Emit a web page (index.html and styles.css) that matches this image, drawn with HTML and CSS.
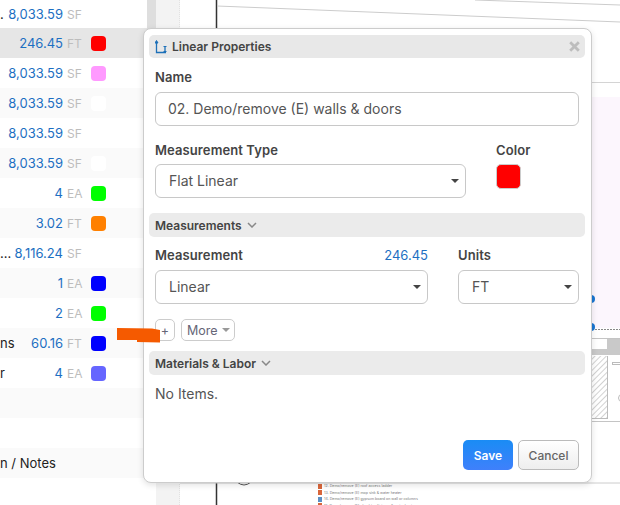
FILE: index.html
```html
<!DOCTYPE html>
<html lang="en">
<head>
<meta charset="utf-8">
<title>Linear Properties</title>
<link rel="stylesheet" href="styles.css">
</head>
<body>
<div class="app">
  <div class="list">
    <div class="row alt"><span class="name">.</span><span class="qty">8,033.59</span><span class="unit">SF</span><span class="chip"></span></div>
    <div class="row sel"><span class="name"></span><span class="qty">246.45</span><span class="unit">FT</span><span class="chip c-red"></span></div>
    <div class="row"><span class="name"></span><span class="qty">8,033.59</span><span class="unit">SF</span><span class="chip c-pink"></span></div>
    <div class="row alt"><span class="name"></span><span class="qty">8,033.59</span><span class="unit">SF</span><span class="chip c-white"></span></div>
    <div class="row"><span class="name"></span><span class="qty">8,033.59</span><span class="unit">SF</span><span class="chip"></span></div>
    <div class="row alt"><span class="name"></span><span class="qty">8,033.59</span><span class="unit">SF</span><span class="chip c-white"></span></div>
    <div class="row"><span class="name"></span><span class="qty">4</span><span class="unit">EA</span><span class="chip c-green"></span></div>
    <div class="row alt"><span class="name"></span><span class="qty">3.02</span><span class="unit">FT</span><span class="chip c-orange"></span></div>
    <div class="row"><span class="name">...</span><span class="qty">8,116.24</span><span class="unit">SF</span><span class="chip"></span></div>
    <div class="row alt"><span class="name"></span><span class="qty">1</span><span class="unit">EA</span><span class="chip c-blue"></span></div>
    <div class="row"><span class="name"></span><span class="qty">2</span><span class="unit">EA</span><span class="chip c-green"></span></div>
    <div class="row alt"><span class="name">ns</span><span class="qty">60.16</span><span class="unit">FT</span><span class="chip c-blue"></span></div>
    <div class="row"><span class="name">r</span><span class="qty">4</span><span class="unit">EA</span><span class="chip c-violet"></span></div>
    <div class="row alt"></div>
    <div class="row"></div>
    <div class="row alt"><span class="name">n / Notes</span></div>
  </div>
  <div class="scrollbar"><div class="thumb"></div></div>
  <div class="gutter"></div>
  <div class="canvas">
    <svg class="drawing" width="440" height="505" viewBox="180 0 440 505">
      <defs>
        <pattern id="hatch" width="4" height="4" patternUnits="userSpaceOnUse" patternTransform="rotate(45)">
          <rect width="4" height="4" fill="#fff"/>
          <path d="M0 0V4" stroke="#c4c4c4" stroke-width="1.500"/>
        </pattern>
      </defs>
      <path d="M216.500 0V505" stroke="#333" stroke-width="1.500" fill="none"/>
      <path d="M217 6L620 22M475 0L620 5" stroke="#ccc" fill="none"/>
      <path d="M592 82.500H620" stroke="#d4d4d4" fill="none"/>
      <rect x="592" y="97" width="28" height="231" fill="#fcf6fd"/>
      <path d="M592 329.500H620" stroke="#888" stroke-dasharray="2 1" fill="none"/>
      <path d="M592 338.500H620M592 421.500H620" stroke="#c4c4c4" fill="none"/>
      <rect x="607" y="339" width="13" height="16" fill="#c9c9c9"/>
      <rect x="592" y="349" width="15" height="6" fill="#c9c9c9"/>
      <rect x="592" y="356" width="15" height="63" fill="url(#hatch)"/>
      <path d="M607.500 356V419M592 418.500H607" stroke="#bbb" fill="none"/>
      <rect x="612.500" y="362.500" width="8" height="2" fill="#fff" stroke="#bbb"/>
      <circle cx="622" cy="398" r="3.500" fill="#fff" stroke="#bbb"/>
      <circle cx="591" cy="299" r="4" fill="#1976d2"/>
      <circle cx="591" cy="327" r="4" fill="#1976d2"/>
      <path d="M180 483H620" stroke="#ccc" fill="none"/>
      <path d="M237 482Q244 488 251 482" stroke="#555" fill="none"/>
      <rect x="318" y="484" width="4" height="5" fill="#d9663a"/>
      <rect x="318" y="490" width="4" height="5" fill="#d9663a"/>
      <rect x="318" y="497" width="4" height="5" fill="#5b8fc4"/>
      <rect x="318" y="503" width="4" height="2" fill="#d9663a"/>
    </svg>
    <div class="legend">
      <span>12. Demo/remove (E) roof access ladder</span>
      <span>13. Demo/remove (E) mop sink &amp; water heater</span>
      <span>14. Demo/remove (E) gypsum board on wall or columns</span>
      <span>15. Demo/remove (E) plumbing fixtures &amp; water heater</span>
    </div>
  </div>

  <section class="modal">
    <header class="modal-title">
      <svg class="title-icon" width="12" height="14" viewBox="0 0 12 14">
        <path d="M1.500 2V12.500H11M10 7V12" fill="none" stroke="#1d70b8" stroke-width="1.300"/>
        <path d="M0 3L1.500 .5L3 3ZM8.500 6.500H11.500M8.500 11.500H11.500" fill="#1d70b8" stroke="#1d70b8"/>
      </svg>
      <span>Linear Properties</span>
      <svg class="close" width="11" height="11" viewBox="0 0 11 11"><path d="M1.200 1.200L9.800 9.800M9.800 1.200L1.200 9.800" fill="none" stroke="#bdbdbd" stroke-width="2.800"/></svg>
    </header>
    <div class="field name-field">
      <label class="label">Name</label>
      <div class="input tall">02. Demo/remove (E) walls &amp; doors</div>
    </div>
    <div class="type-row">
      <div class="field grow">
        <label class="label">Measurement Type</label>
        <div class="input select">Flat Linear<span class="caret"></span></div>
      </div>
      <div class="field color-field">
        <label class="label">Color</label>
        <span class="swatch"></span>
      </div>
    </div>
    <div class="section-bar first">Measurements <svg class="chev" width="10" height="6" viewBox="0 0 10 6"><path d="M1 1L5 5L9 1" fill="none" stroke="#888" stroke-width="1.500"/></svg></div>
    <div class="meas-row">
      <div class="field grow">
        <div class="label-row"><label class="label">Measurement</label><span class="value">246.45</span></div>
        <div class="input tall select">Linear<span class="caret"></span></div>
      </div>
      <div class="field units-field">
        <label class="label">Units</label>
        <div class="input tall select">FT<span class="caret"></span></div>
      </div>
    </div>
    <div class="tools">
      <button class="btn-small plus">+</button>
      <button class="btn-small more">More<span class="caret grey"></span></button>
    </div>
    <div class="section-bar">Materials &amp; Labor <svg class="chev" width="10" height="6" viewBox="0 0 10 6"><path d="M1 1L5 5L9 1" fill="none" stroke="#888" stroke-width="1.500"/></svg></div>
    <p class="empty">No Items.</p>
    <footer class="actions">
      <button class="save">Save</button>
      <button class="cancel">Cancel</button>
    </footer>
  </section>

  <svg class="marker" width="43" height="15" viewBox="0 0 43 15"><path d="M0 0L35 .5L43 2V14.500L20 14V12H0Z" fill="#f55a00"/></svg>
</div>
</body>
</html>
```
FILE: styles.css
```css
* { box-sizing: border-box; }
html, body { margin: 0; padding: 0; }
body { width: 620px; height: 505px; overflow: hidden; background: #fff; font-family: Inter, "Liberation Sans", sans-serif; }
.app { position: relative; display: flex; width: 620px; height: 505px; overflow: hidden; }

.list { width: 147px; flex: none; background: #fff; }
.row { display: flex; align-items: center; height: 30px; background: #fff; font-size: 13px; color: #222; }
.row:first-child { height: 28px; }
.row.alt { background: #fafafa; }
.row.alt:first-child { background: #fff; }
.row.sel { background: #e6e6e6; }
.name { flex: 1; min-width: 0; white-space: nowrap; color: #222; }
.qty { color: #1c6fc2; font-size: 13px; }
.unit { width: 16px; margin-left: 4px; color: #bdbdbd; font-size: 12px; white-space: nowrap; }
.chip { width: 15px; height: 15px; margin: 0 41px 0 8px; border-radius: 4px; }
.c-red { background: #f00; }
.c-pink { background: #ff99ff; }
.c-white { background: #fff; }
.c-green { background: #0f0; }
.c-orange { background: #ff8000; }
.c-blue { background: #00f; }
.c-violet { background: #6666ff; }

.scrollbar { width: 9px; flex: none; background: #fff; }
.thumb { height: 120px; background: #dedede; }
.gutter { width: 24px; flex: none; background: #f3f3f3; border-right: 1px dotted #e2e2e2; }
.canvas { flex: 1; position: relative; background: #fff; }
.drawing { position: absolute; left: 0; top: 0; }
.legend { position: absolute; left: 144px; top: 483px; display: flex; flex-direction: column; font-size: 3.600px; line-height: 6.600px; color: #777; white-space: nowrap; }

.modal { position: absolute; left: 143px; top: 28px; width: 449px; height: 455px; display: flex; flex-direction: column; padding: 6px 6px 6px 5px; background: #fff; border: 1px solid #ccc; border-radius: 8px; box-shadow: 0 2px 6px rgba(0,0,0,.12); color: #444; }
.modal-title { display: flex; align-items: center; height: 23px; padding-left: 6px; flex: none; background: #e8e8e8; border-radius: 5px; font-size: 12px; font-weight: 600; color: #444; }
.title-icon { margin-right: 5px; }
.close { margin-left: auto; margin-right: 5px; }

.field { display: flex; flex-direction: column; min-width: 0; }
.grow { flex: 1; }
.label { font-size: 13px; font-weight: 600; line-height: 16px; letter-spacing: .1px; color: #444; }
.label-row { display: flex; justify-content: space-between; align-items: center; }
.value { color: #1c6fc2; font-size: 13px; }
.input { position: relative; height: 34px; margin-top: 6px; padding: 0 0 2px 13px; display: flex; align-items: center; background: #fff; border: 1px solid #c8c8c8; border-radius: 6px; font-size: 14px; color: #555; }
.input.tall { margin-top: 7px; }
.caret { position: absolute; right: 6px; top: 14px; width: 0; height: 0; border-left: 4px solid transparent; border-right: 4px solid transparent; border-top: 4px solid #444; }

.name-field { margin: 11px 6px 0; }
.name-field .input { padding-left: 12px; }
.type-row { display: flex; gap: 30px; margin: 16px 6px 0; }
.color-field { width: 83px; flex: none; }
.swatch { display: block; width: 25px; height: 25px; margin-top: 6px; background: #f00; border: 1px solid #ccc; border-radius: 5px; }
.section-bar { display: flex; align-items: center; gap: 5px; height: 24px; flex: none; padding-left: 6px; background: #ebebeb; border-radius: 5px; font-size: 12px; font-weight: 600; color: #444; }
.section-bar.first { margin-top: 15px; }
.meas-row { display: flex; gap: 30px; margin: 10px 6px 0; }
.units-field { width: 121px; flex: none; }

.tools { display: flex; gap: 6px; margin: 15px 6px 10px; }
.btn-small { height: 22px; padding: 0; background: #fff; border: 1px solid #ccc; border-radius: 5px; font: 12.500px Inter, "Liberation Sans", sans-serif; color: #667; }
.plus { width: 20px; }
.more { position: relative; width: 54px; padding-left: 5px; text-align: left; }
.caret.grey { right: 4px; top: 8px; border-top-color: #999; border-left-width: 4.500px; border-right-width: 4.500px; }
.empty { margin: 10px 6px 0; font-size: 14px; line-height: 17px; color: #555; }
.actions { display: flex; justify-content: flex-end; gap: 5px; margin: auto 6px 6px 0; }
.save, .cancel { height: 30px; border-radius: 5px; font: 500 12px Inter, "Liberation Sans", sans-serif; }
.save { width: 50px; background: linear-gradient(#1a8cf5, #3f80fb); border: 0; color: #fff; font-weight: 600; }
.cancel { width: 61px; background: linear-gradient(#fff, #eee); border: 1px solid #bbb; color: #666; }
.marker { position: absolute; left: 117px; top: 328px; }
```
